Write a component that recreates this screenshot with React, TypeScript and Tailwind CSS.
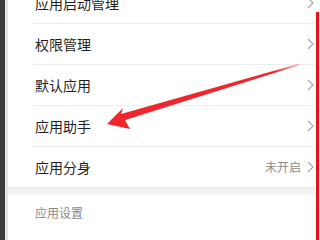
const rows = [
    { label: '应用启动管理' },
    { label: '权限管理' },
    { label: '默认应用' },
    { label: '应用助手' },
    { label: '应用分身', value: '未开启' },
];

function Chevron() {
    return (
        <svg width="7" height="12" viewBox="0 0 7 12" className="shrink-0">
            <path d="M1 1 L6 6 L1 11" fill="none" stroke="#a8a8a8" strokeWidth="1.2" />
        </svg>
    );
}

export default function App() {
    return (
        <div
            className="relative flex h-[240px] w-[320px] overflow-hidden bg-white"
            style={{ fontFamily: '"Noto Sans CJK SC", "Noto Sans", sans-serif' }}
        >
            <div className="w-[5px] shrink-0 bg-[#3d3d3d]" />
            <div className="w-[3px] shrink-0 bg-[#e6e6e6]" />
            <div className="flex min-w-0 flex-1 flex-col">
                <div className="-mt-[17px] flex flex-col">
                    {rows.map((row, i) => (
                        <div key={row.label}>
                            <div className="flex h-[40px] items-center pl-[27px] pr-[1px]">
                                <span className="flex-1 text-[14px] leading-none text-[#1f1f1f]">{row.label}</span>
                                {row.value && (
                                    <span className="mr-[6px] text-[12px] leading-none text-[#8a8a8a]">{row.value}</span>
                                )}
                                <Chevron />
                            </div>
                            {i < rows.length - 1 && <div className="ml-[25px] h-px bg-[#ececec]" />}
                        </div>
                    ))}
                </div>
                <div className="h-[8px] bg-gradient-to-b from-[#ededed] to-[#f6f6f6]" />
                <div className="flex h-[36px] items-center pl-[27px]">
                    <span className="text-[12px] leading-none text-[#8a8a8a]">应用设置</span>
                </div>
            </div>
            <div className="flex w-[5px] shrink-0 flex-col">
                <div className="ml-px flex-1 pt-[12px]">
                    <div className="h-full w-[3px] bg-[#e8101a]" />
                </div>
            </div>
            <svg className="pointer-events-none absolute left-0 top-0" width="320" height="240" viewBox="0 0 320 240">
                <defs>
                    <linearGradient id="fade" x1="120" y1="118" x2="300" y2="64" gradientUnits="userSpaceOnUse">
                        <stop offset="0" stopColor="#f0262c" />
                        <stop offset="0.85" stopColor="#f0262c" />
                        <stop offset="1" stopColor="#f0262c" stopOpacity="0.3" />
                    </linearGradient>
                </defs>
                <polygon
                    points="107,124 123,108 121,114 298,64 300,65 125,120 130,129"
                    fill="url(#fade)"
                />
            </svg>
        </div>
    );
}
